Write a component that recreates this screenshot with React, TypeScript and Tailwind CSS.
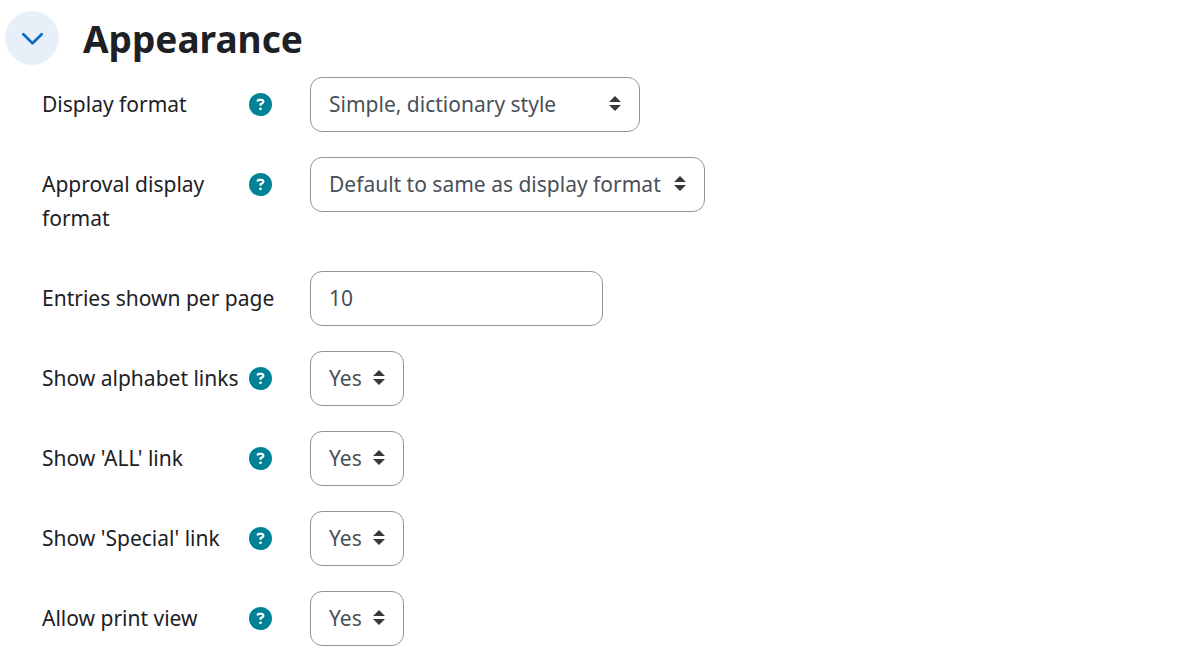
import { useState } from "react"
import { FaCircleQuestion } from "react-icons/fa6"

interface Field {
  id: string
  label: string
  help: boolean
  options?: string[]
  value?: string
  width: string
}

const YES_NO = ["Yes", "No"]

const FIELDS: Field[] = [
  {
    id: "displayformat",
    label: "Display format",
    help: true,
    options: ["Simple, dictionary style", "Continuous without author", "Encyclopedia", "Entry list", "FAQ"],
    width: "w-[330px]",
  },
  {
    id: "approvaldisplayformat",
    label: "Approval display format",
    help: true,
    options: ["Default to same as display format", "Simple, dictionary style", "Encyclopedia"],
    width: "w-[395px]",
  },
  { id: "entbypage", label: "Entries shown per page", help: false, value: "10", width: "w-[293px]" },
  { id: "showalphabet", label: "Show alphabet links", help: true, options: YES_NO, width: "w-[94px]" },
  { id: "showall", label: "Show 'ALL' link", help: true, options: YES_NO, width: "w-[94px]" },
  { id: "showspecial", label: "Show 'Special' link", help: true, options: YES_NO, width: "w-[94px]" },
  { id: "allowprintview", label: "Allow print view", help: true, options: YES_NO, width: "w-[94px]" },
]

const control =
  "block h-[55px] w-full appearance-none rounded-xl border border-[#8f959e] bg-white pb-0.5 pl-[18px] text-[#495057] outline-none focus:border-[#0f6cbf]"

function FieldRow({ field }: { field: Field }) {
  return (
    <div className="flex items-start gap-[38px]">
      <div className="flex w-[230px] shrink-0 items-start justify-between pt-[10px] pb-[11px]">
        <label htmlFor={field.id} className={field.help ? "" : "whitespace-nowrap"}>
          {field.label}
        </label>
        {field.help && (
          <button type="button" aria-label={`Help with ${field.label}`} className="flex h-[34px] shrink-0 items-center">
            <FaCircleQuestion className="h-[23px] w-[23px] text-[#008196]" />
          </button>
        )}
      </div>

      <div className={`relative shrink-0 ${field.width}`}>
        {field.options ? (
          <>
            <select id={field.id} className={`${control} pr-9`}>
              {field.options.map((option) => (
                <option key={option}>{option}</option>
              ))}
            </select>
            <svg
              className="pointer-events-none absolute top-[19px] right-[19px] h-[15px] w-3"
              viewBox="0 0 4 5"
              aria-hidden="true"
            >
              <path fill="#343a40" d="M2 0L0 2h4zm0 5L0 3h4z" />
            </svg>
          </>
        ) : (
          <input id={field.id} type="text" defaultValue={field.value} className={`${control} pr-[18px]`} />
        )}
      </div>
    </div>
  )
}

export default function App() {
  const [open, setOpen] = useState(true)

  return (
    <main className="min-h-screen bg-white pt-[11px] pb-6 font-['Noto_Sans',sans-serif] text-[21px] leading-[34px] text-[#1d2125]">
      <div className="flex items-center gap-6 pl-[5px]">
        <button
          type="button"
          aria-expanded={open}
          aria-label="Appearance"
          onClick={() => setOpen(!open)}
          className="flex h-[54px] w-[54px] items-center justify-center rounded-full bg-[#e7f0f9]"
        >
          <svg className={open ? "h-6 w-6" : "h-6 w-6 -rotate-90"} viewBox="0 0 24 24" fill="none" aria-hidden="true">
            <path d="M3.3 8.2L12.5 17.2L21.7 8.2" stroke="#0f6cbf" strokeWidth="2.7" strokeLinecap="round" strokeLinejoin="round" />
          </svg>
        </button>
        <h3 className="pt-0.5 text-[37px] leading-[46px] font-bold">Appearance</h3>
      </div>

      {open && (
        <form className="mt-3 flex flex-col gap-[25px] pl-[42px]">
          {FIELDS.map((field) => (
            <FieldRow key={field.id} field={field} />
          ))}
        </form>
      )}
    </main>
  )
}
